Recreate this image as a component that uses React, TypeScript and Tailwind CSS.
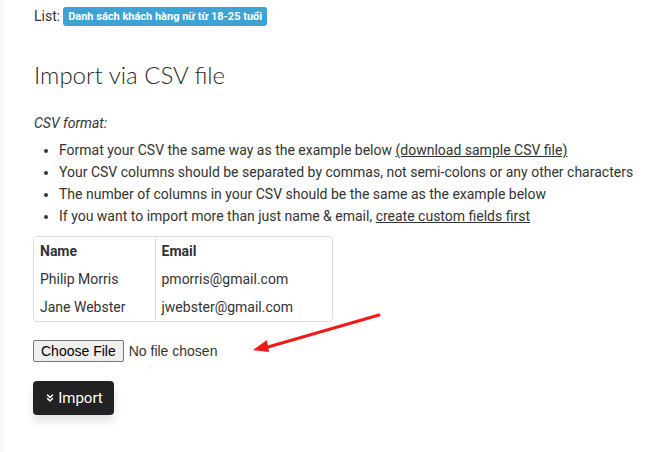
import { ChevronsDown } from "lucide-react";

const rows = [
  { name: "Philip Morris", email: "pmorris@gmail.com" },
  { name: "Jane Webster", email: "jwebster@gmail.com" },
];

export default function App() {
  return (
    <div className="flex min-h-[452px] bg-white text-[#333] font-['Roboto',sans-serif] text-[14px]">
      <div className="w-[6px] shrink-0 bg-gradient-to-r from-[#f5f5f5] to-white" />
      <div className="relative flex-1 pl-[28px] pt-[7px]">
        <p className="flex items-center gap-[3px] leading-[19px]">
          <span>List:</span>
          <span className="rounded-[3px] bg-[#3da3d5] px-[5px] text-[11px] font-bold leading-[19px] text-white">
            Danh sách khách hàng nữ từ 18-25 tuổi
          </span>
        </p>

        <h2 className="mt-[34px] font-['Lato',sans-serif] text-[24px] font-light leading-[30px] text-[#2a2a2a]">
          Import via CSV file
        </h2>

        <p className="mt-[23px] italic leading-[20px]">CSV format:</p>
        <ul className="mt-[6px] list-disc pl-[25px] leading-[22px]">
          <li>
            Format your CSV the same way as the example below{" "}
            <a href="#" className="underline">(download sample CSV file)</a>
          </li>
          <li>Your CSV columns should be separated by commas, not semi-colons or any other characters</li>
          <li>The number of columns in your CSV should be the same as the example below</li>
          <li>
            If you want to import more than just name &amp; email,{" "}
            <a href="#" className="underline">create custom fields first</a>
          </li>
        </ul>

        <div className="-ml-px mt-[9px] w-[300px] overflow-hidden rounded-[4px] border border-[#ddd]">
          <table className="w-full border-collapse">
            <thead>
              <tr>
                <th className="h-[28px] w-[121px] border-r border-[#ddd] px-[6px] text-left font-bold">Name</th>
                <th className="h-[28px] px-[6px] text-left font-bold">Email</th>
              </tr>
            </thead>
            <tbody>
              {rows.map((r) => (
                <tr key={r.email}>
                  <td className="h-[28px] border-r border-[#ddd] px-[6px]">{r.name}</td>
                  <td className="h-[28px] px-[6px]">{r.email}</td>
                </tr>
              ))}
            </tbody>
          </table>
        </div>

        <div className="-ml-px mt-[18px] flex">
          <input
            type="file"
            className="font-['Liberation_Sans',Arial,sans-serif] text-[14px] leading-[18px] text-[#333] file:mr-[5px] file:rounded-[2px] file:border file:border-solid file:border-[#767676] file:bg-[#efefef] file:px-[7px] file:py-[1px] file:text-[14px] file:text-black"
          />
        </div>

        <button
          type="button"
          className="-ml-px mt-[19px] flex h-[34px] w-[81px] items-center justify-center gap-[2px] rounded-[4px] bg-[#222] text-[15px] text-white shadow-[0_6px_10px_rgba(0,0,0,0.12)]"
        >
          <ChevronsDown size={12} strokeWidth={3} />
          Import
        </button>

        <svg className="absolute left-[241px] top-[309px]" width="140" height="48" viewBox="0 0 140 48">
          <line x1="132" y1="6" x2="14" y2="40" stroke="#ef1a1a" strokeWidth="3" strokeLinecap="round" />
          <polygon points="6,41 20,31 22,43" fill="#ef1a1a" />
        </svg>
      </div>
    </div>
  );
}
